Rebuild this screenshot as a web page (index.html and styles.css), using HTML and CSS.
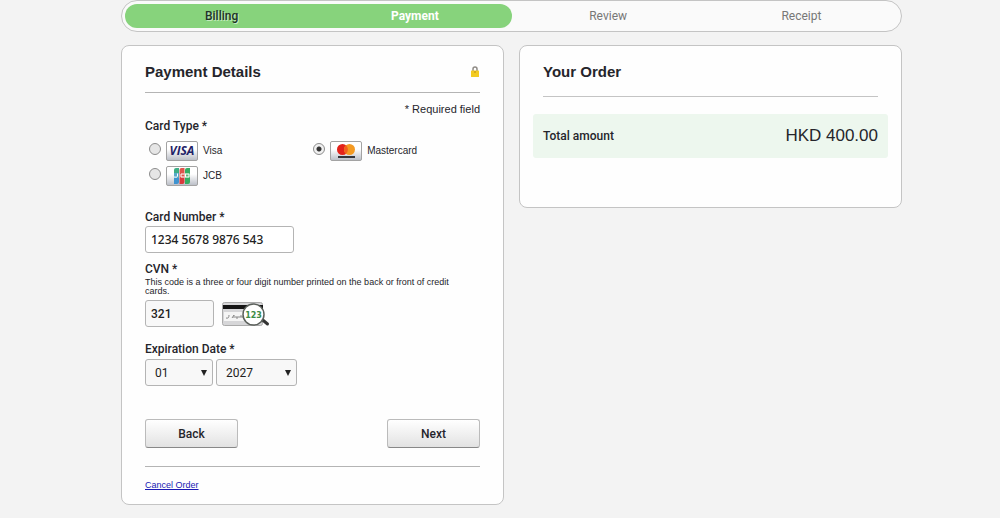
FILE: index.html
```html
<!DOCTYPE html>
<html lang="en">
<head>
    <meta charset="UTF-8">
    <meta name="viewport" content="width=device-width, initial-scale=1.0">
    <title>Payment Details</title>
    <link rel="stylesheet" href="styles.css">
</head>
<body>

<ol class="steps">
    <li class="done">Billing</li>
    <li class="current">Payment</li>
    <li>Review</li>
    <li>Receipt</li>
</ol>

<main class="columns">
    <form class="panel">
        <header class="panel-header">
            <h1>Payment Details</h1>
            <svg class="lock" viewBox="0 0 10 12" aria-hidden="true">
                <path d="M3 5V3a2 2 0 0 1 4 0v2" fill="none" stroke="#8f8b86" stroke-width="1.5"/>
                <rect x="1" y="4.5" width="8" height="6.5" rx="0.5" fill="#f3cb21"/>
                <rect x="4.5" y="5" width="1" height="2" fill="#b98a1a"/>
            </svg>
        </header>

        <p class="required">* Required field</p>

        <fieldset class="card-types">
            <legend>Card Type *</legend>
            <div class="card-option">
                <input type="radio" id="visa" name="cardType">
                <label for="visa">
                    <svg class="card-logo" viewBox="0 0 32 20" aria-hidden="true">
                        <defs>
                            <linearGradient id="cardFill" x1="0" y1="0" x2="0" y2="1">
                                <stop offset="0.4" stop-color="#fff"/>
                                <stop offset="1" stop-color="#b9bdc6"/>
                            </linearGradient>
                        </defs>
                        <rect x="0.5" y="0.5" width="31" height="19" rx="1.5" fill="url(#cardFill)" stroke="#a3a3a3"/>
                        <text class="visa-mark" x="16" y="14" text-anchor="middle">VISA</text>
                    </svg>
                    Visa
                </label>
            </div>
            <div class="card-option">
                <input type="radio" id="mastercard" name="cardType" checked>
                <label for="mastercard">
                    <svg class="card-logo" viewBox="0 0 32 20" aria-hidden="true">
                        <rect x="0.5" y="0.5" width="31" height="19" rx="1.5" fill="url(#cardFill)" stroke="#a3a3a3"/>
                        <circle cx="12.5" cy="8.5" r="5.5" fill="#e3221b"/>
                        <circle cx="19.5" cy="8.5" r="5.5" fill="#f49a22"/>
                        <path d="M16 4.3a5.5 5.5 0 0 1 0 8.4a5.5 5.5 0 0 1 0-8.4z" fill="#f2601e"/>
                        <rect x="8" y="15" width="17" height="2" fill="#33343a"/>
                    </svg>
                    Mastercard
                </label>
            </div>
            <div class="card-option">
                <input type="radio" id="jcb" name="cardType">
                <label for="jcb">
                    <svg class="card-logo" viewBox="0 0 32 20" aria-hidden="true">
                        <rect x="0.5" y="0.5" width="31" height="19" rx="1.5" fill="url(#cardFill)" stroke="#a3a3a3"/>
                        <path d="M8 18V12h5v4q0 2-2 2z" fill="#3f93cf"/>
                        <path d="M13.500 18V12h5v4q0 2-2 2z" fill="#d93a3c"/>
                        <path d="M19 18V12h5v4q0 2-2 2z" fill="#35ad63"/>
                        <path d="M8 7V4q0-2 2-2h3v5z" fill="#3fae86"/>
                        <path d="M13.500 7V4q0-2 2-2h3v5z" fill="#e0544c"/>
                        <path d="M19 7V4q0-2 2-2h3v5z" fill="#35ad63"/>
                        <path d="M8 7h5v5H8z" fill="#58a9c9"/>
                        <path d="M13.500 7h5v5h-5z" fill="#e0544c"/>
                        <path d="M19 7h5v5h-5z" fill="#5cbd7c"/>
                        <path d="M8 11q3.500 1 3.500-1V7.500M18.500 8H15v3h3.500M19 8h4M19 11h4M19.500 8v3M23 8v3" fill="none" stroke="#fff"/>
                    </svg>
                    JCB
                </label>
            </div>
        </fieldset>

        <div class="field">
            <label for="cardNumber">Card Number *</label>
            <input class="card-number" type="text" id="cardNumber" value="1234 5678 9876 543">
        </div>

        <div class="field">
            <label for="cvn">CVN *</label>
            <p class="hint" id="cvnHint">This code is a three or four digit number printed on the back or front of credit cards.</p>
            <div class="cvn-row">
                <input class="cvn" type="text" id="cvn" value="321" aria-describedby="cvnHint">
                <svg class="cvn-card" viewBox="0 0 49 27" aria-hidden="true">
                    <rect x="0.5" y="2.5" width="40" height="23" rx="2" fill="#d6d6d8" stroke="#aaa"/>
                    <rect x="1" y="5" width="40" height="4" fill="#151515"/>
                    <rect x="2" y="12" width="22" height="9" fill="#f5f5f5"/>
                    <path d="M4 18q3 1 3-3M10 18l2-3v3M14 16v2h2v-2M18 18v-2h2v2" fill="none" stroke="#888"/>
                    <path d="M39.5 19l6 5" stroke="#333" stroke-width="3" stroke-linecap="round"/>
                    <circle cx="31.5" cy="14.5" r="10.5" fill="#fff" stroke="#5b605b" stroke-width="1.5"/>
                    <text class="cvn-digits" x="31.5" y="18" text-anchor="middle">123</text>
                </svg>
            </div>
        </div>

        <fieldset class="expiry">
            <legend>Expiration Date *</legend>
            <span class="select-box month">
                <select aria-label="Month">
                    <option>01</option>
                </select>
            </span>
            <span class="select-box year">
                <select aria-label="Year">
                    <option>2027</option>
                </select>
            </span>
        </fieldset>

        <div class="buttons">
            <button type="button">Back</button>
            <button type="submit">Next</button>
        </div>

        <footer class="panel-footer">
            <a href="#">Cancel Order</a>
        </footer>
    </form>

    <section class="panel order">
        <header class="panel-header">
            <h2>Your Order</h2>
        </header>
        <div class="total">
            <span class="total-label">Total amount</span>
            <span class="total-value">HKD 400.00</span>
        </div>
    </section>
</main>

</body>
</html>
```
FILE: styles.css
```css
* {
    box-sizing: border-box;
}

body {
    font-family: Roboto, "Liberation Sans", Arial, sans-serif;
    font-size: 12px;
    line-height: 14px;
    color: #25252b;
    background-color: #f3f3f3;
    margin: 0;
    padding: 0 98px 12px 121px;
}

h1, h2, p {
    margin: 0;
}

/* progress bar */
.steps {
    display: flex;
    margin: 0 0 13px;
    padding: 3px;
    list-style: none;
    background-color: #fafafa;
    border: 1px solid #c4c4c4;
    border-radius: 16px;
}

.steps li {
    flex: 1;
    line-height: 24px;
    text-align: center;
    color: #777;
}

.steps .done {
    background-color: #87d37c;
    border-radius: 12px 0 0 12px;
    color: #1f3327;
    font-weight: 500;
    text-shadow: 1px 1px 0 #c5eabf;
}

.steps .current {
    background-color: #87d37c;
    border-radius: 0 12px 12px 0;
    color: #fff;
    font-weight: bold;
}

/* panels */
.columns {
    display: grid;
    grid-template-columns: 1fr 1fr;
    gap: 15px;
    align-items: start;
}

.panel {
    padding: 0 23px;
    background-color: #fefefe;
    border: 1px solid #c4c4c4;
    border-radius: 8px;
}

.panel-header {
    display: flex;
    justify-content: space-between;
    align-items: center;
    height: 47px;
    padding-top: 6px;
    border-bottom: 1px solid #b4b4b4;
}

h1, h2 {
    font-family: "Liberation Sans", Arial, sans-serif;
    font-size: 15px;
    line-height: 20px;
}

.lock {
    width: 10px;
    height: 12px;
}

.required {
    margin-top: 9px;
    font-family: "Liberation Sans", Arial, sans-serif;
    font-size: 11px;
    text-align: right;
}

/* form fields */
fieldset {
    margin: 0;
    padding: 0;
    border: 0;
    min-width: 0;
}

legend {
    padding: 0;
    font-weight: 500;
}

.card-types {
    display: grid;
    grid-template-columns: 49% 51%;
    row-gap: 3px;
    margin-top: 3px;
}

.card-types legend {
    margin-bottom: 7px;
}

.card-option {
    display: flex;
    align-items: center;
    gap: 5px;
    height: 22px;
    padding-left: 4px;
}

.card-option label {
    display: flex;
    align-items: center;
    gap: 5px;
    font-family: "Liberation Sans", Arial, sans-serif;
    font-size: 10px;
}

.card-option input {
    appearance: none;
    width: 12px;
    height: 12px;
    margin: 0 0 4px;
    border: 1px solid #8c8c8c;
    border-radius: 50%;
    background-color: #e6e6e6;
}

.card-option input:checked {
    background: radial-gradient(circle, #333 0 2px, #f0f0f0 3px);
}

.card-logo {
    width: 32px;
    height: 20px;
}

.visa-mark {
    font-family: "Open Sans", sans-serif;
    font-size: 12px;
    font-weight: bold;
    font-style: italic;
    fill: #1f2368;
}

.field {
    margin-top: 9px;
}

.card-types + .field {
    margin-top: 23px;
}

.field label {
    display: block;
    font-weight: 500;
}

.field input,
select {
    height: 27px;
    padding: 0 5px;
    border: 1px solid #b4b4b4;
    border-radius: 3px;
    background-color: #f8f8f8;
    color: #222;
}

.field .card-number {
    display: block;
    width: 149px;
    margin-top: 2px;
    background-color: #fff;
    font-family: "Noto Sans", "Open Sans", sans-serif;
    font-size: 12px;
    font-weight: 500;
}

.hint {
    margin-top: 2px;
    padding-right: 10px;
    font-family: "Liberation Sans", Arial, sans-serif;
    font-size: 9px;
    line-height: 9px;
}

.cvn-row {
    display: flex;
    align-items: center;
    gap: 8px;
    margin-top: 4px;
}

.field .cvn {
    width: 69px;
    font-family: Roboto, "Liberation Sans", sans-serif;
    font-size: 12px;
    font-weight: 500;
}

.cvn-card {
    width: 49px;
    height: 27px;
}

.cvn-digits {
    font-family: "DejaVu Sans", sans-serif;
    font-size: 8px;
    font-weight: bold;
    fill: #3c8c46;
}

.expiry {
    display: flex;
    gap: 3px;
    margin-top: 15px;
}

.expiry legend {
    margin-bottom: 3px;
}

.select-box {
    display: grid;
    align-items: center;
}

.select-box select,
.select-box::after {
    grid-area: 1 / 1;
}

/* drop-down arrow */
.select-box::after {
    content: "";
    justify-self: end;
    margin-right: 6px;
    border-top: 6px solid #222;
    border-left: 3px solid transparent;
    border-right: 3px solid transparent;
    pointer-events: none;
}

select {
    appearance: none;
    width: 100%;
    padding: 0 9px;
    font-family: Roboto, "Liberation Sans", sans-serif;
    font-size: 12px;
}

.month {
    width: 68px;
}

.year {
    width: 81px;
}

.buttons {
    display: flex;
    justify-content: space-between;
    margin-top: 33px;
}

button {
    width: 93px;
    height: 29px;
    padding: 0;
    font-family: inherit;
    font-size: 12px;
    font-weight: 500;
    color: #25252b;
    background: linear-gradient(#fff, #e2e2e2);
    border: 1px solid #bbb;
    border-bottom-color: #888;
    border-radius: 3px;
}

.panel-footer {
    margin-top: 18px;
    padding: 11px 0 12px;
    border-top: 1px solid #b4b4b4;
    font-family: "Liberation Sans", Arial, sans-serif;
    font-size: 9px;
}

.panel-footer a {
    color: #1a1ab4;
}

/* order summary */
.order .panel-header {
    height: 51px;
    padding-top: 2px;
    border-bottom-color: #c4c4c4;
}

.total {
    display: flex;
    justify-content: space-between;
    align-items: center;
    height: 44px;
    margin: 17px -10px 49px;
    padding: 0 10px;
    background-color: #edf7ee;
    border-radius: 3px;
}

.total-label {
    font-weight: 500;
}

.total-value {
    font-family: "Liberation Sans", Arial, sans-serif;
    font-size: 17px;
}
```
